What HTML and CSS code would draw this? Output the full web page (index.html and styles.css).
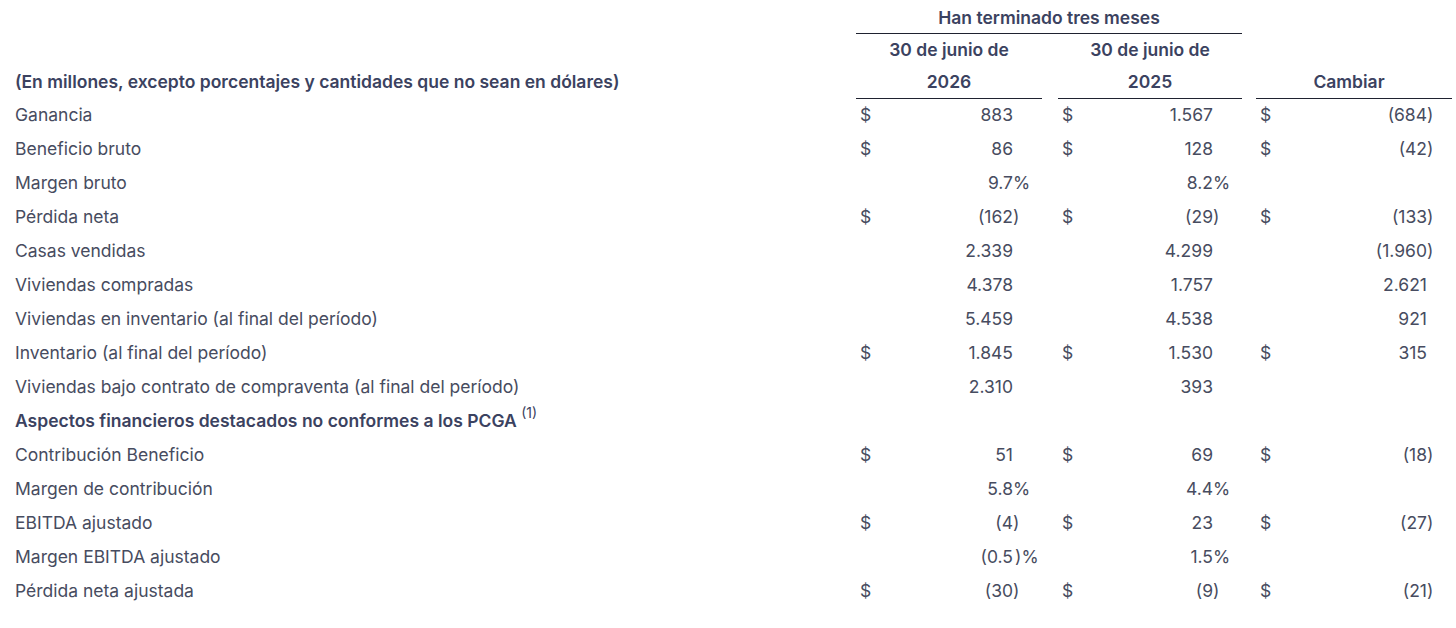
FILE: index.html
```html
<!DOCTYPE html>
<html lang="es">
<head>
<meta charset="utf-8">
<title>Resultados</title>
<link rel="stylesheet" href="styles.css">
</head>
<body>
<div class="fin">
  <div class="row head1">
    <div class="lab"></div>
    <div class="span12 hcell toprule">Han terminado tres meses</div>
  </div>
  <div class="row head2">
    <div class="lab hlab">(En millones, excepto porcentajes y cantidades que no sean en dólares)</div>
    <div class="g1 hcell rule">30 de junio de<br>2026</div>
    <div class="gap1"></div>
    <div class="g2 hcell rule">30 de junio de<br>2025</div>
    <div class="gap2"></div>
    <div class="g3 hcell rule cambiar"><span>Cambiar</span></div>
  </div>

  <div class="row"><div class="lab">Ganancia</div><div class="d">$</div><div class="n">883</div><div class="s"></div><div></div><div class="d">$</div><div class="n">1.567</div><div class="s"></div><div></div><div class="d">$</div><div class="n">(684</div><div class="s">)</div></div>
  <div class="row"><div class="lab">Beneficio bruto</div><div class="d">$</div><div class="n">86</div><div class="s"></div><div></div><div class="d">$</div><div class="n">128</div><div class="s"></div><div></div><div class="d">$</div><div class="n">(42</div><div class="s">)</div></div>
  <div class="row"><div class="lab">Margen bruto</div><div class="d"></div><div class="n">9.7</div><div class="s">%</div><div></div><div class="d"></div><div class="n">8.2</div><div class="s">%</div><div></div><div class="d"></div><div class="n"></div><div class="s"></div></div>
  <div class="row"><div class="lab">Pérdida neta</div><div class="d">$</div><div class="n">(162</div><div class="s">)</div><div></div><div class="d">$</div><div class="n">(29</div><div class="s">)</div><div></div><div class="d">$</div><div class="n">(133</div><div class="s">)</div></div>
  <div class="row"><div class="lab">Casas vendidas</div><div class="d"></div><div class="n">2.339</div><div class="s"></div><div></div><div class="d"></div><div class="n">4.299</div><div class="s"></div><div></div><div class="d"></div><div class="n">(1.960</div><div class="s">)</div></div>
  <div class="row"><div class="lab">Viviendas compradas</div><div class="d"></div><div class="n">4.378</div><div class="s"></div><div></div><div class="d"></div><div class="n">1.757</div><div class="s"></div><div></div><div class="d"></div><div class="n">2.621</div><div class="s"></div></div>
  <div class="row"><div class="lab">Viviendas en inventario (al final del período)</div><div class="d"></div><div class="n">5.459</div><div class="s"></div><div></div><div class="d"></div><div class="n">4.538</div><div class="s"></div><div></div><div class="d"></div><div class="n">921</div><div class="s"></div></div>
  <div class="row"><div class="lab">Inventario (al final del período)</div><div class="d">$</div><div class="n">1.845</div><div class="s"></div><div></div><div class="d">$</div><div class="n">1.530</div><div class="s"></div><div></div><div class="d">$</div><div class="n">315</div><div class="s"></div></div>
  <div class="row"><div class="lab">Viviendas bajo contrato de compraventa (al final del período)</div><div class="d"></div><div class="n">2.310</div><div class="s"></div><div></div><div class="d"></div><div class="n">393</div><div class="s"></div><div></div><div class="d"></div><div class="n"></div><div class="s"></div></div>
  <div class="row"><div class="lab sect">Aspectos financieros destacados no conformes a los PCGA <sup class="fn">(1)</sup></div></div>
  <div class="row"><div class="lab">Contribución Beneficio</div><div class="d">$</div><div class="n">51</div><div class="s"></div><div></div><div class="d">$</div><div class="n">69</div><div class="s"></div><div></div><div class="d">$</div><div class="n">(18</div><div class="s">)</div></div>
  <div class="row"><div class="lab">Margen de contribución</div><div class="d"></div><div class="n">5.8</div><div class="s">%</div><div></div><div class="d"></div><div class="n">4.4</div><div class="s">%</div><div></div><div class="d"></div><div class="n"></div><div class="s"></div></div>
  <div class="row"><div class="lab">EBITDA ajustado</div><div class="d">$</div><div class="n">(4</div><div class="s">)</div><div></div><div class="d">$</div><div class="n">23</div><div class="s"></div><div></div><div class="d">$</div><div class="n">(27</div><div class="s">)</div></div>
  <div class="row"><div class="lab">Margen EBITDA ajustado</div><div class="d"></div><div class="n">(0.5</div><div class="s sp">)%</div><div></div><div class="d"></div><div class="n">1.5</div><div class="s">%</div><div></div><div class="d"></div><div class="n"></div><div class="s"></div></div>
  <div class="row"><div class="lab">Pérdida neta ajustada</div><div class="d">$</div><div class="n">(30</div><div class="s">)</div><div></div><div class="d">$</div><div class="n">(9</div><div class="s">)</div><div></div><div class="d">$</div><div class="n">(21</div><div class="s">)</div></div>
</div>
</body>
</html>
```

FILE: styles.css
```css
html, body {
  margin: 0;
  padding: 0;
  background: #ffffff;
}

body {
  font-family: Inter, "Liberation Sans", sans-serif;
  font-size: 17.5px;
  color: #474c60;
}

.fin {
  padding-left: 15px;
  width: 1437px;
}

.row {
  display: grid;
  grid-template-columns: 841px 28px 129px 29px 16px 28px 127px 29px 14px 28px 143px 25px;
  height: 34px;
  align-items: center;
  line-height: 34px;
  white-space: nowrap;
}

.lab {
  grid-column: 1;
}

.d {
  padding-left: 4px;
}

.n {
  text-align: right;
}

.s {
  text-align: left;
}

.s.sp {
  padding-left: 2px;
}

.sect {
  font-weight: 600;
  color: #3b4260;
}

.fn {
  font-weight: 400;
  font-size: 14px;
  line-height: 0;
  vertical-align: 9px;
  color: #3b4260;
}

.hcell {
  font-weight: 600;
  color: #3b4260;
  text-align: center;
}

.span12 {
  grid-column: 2 / 9;
  height: 34px;
  box-sizing: border-box;
  line-height: 35px;
}

.toprule {
  border-bottom: 1px solid #1f2230;
}

.head2 {
  height: 64px;
  align-items: stretch;
  line-height: 32px;
}

.hlab {
  font-weight: 600;
  color: #3b4260;
  align-self: end;
  padding-bottom: 1px;
}

.g1 {
  grid-column: 2 / 5;
}

.g2 {
  grid-column: 6 / 9;
}

.g3 {
  grid-column: 10 / 13;
}

.rule {
  border-bottom: 1px solid #1f2230;
  box-sizing: border-box;
}

.cambiar {
  display: flex;
  align-items: flex-end;
  justify-content: center;
  padding-right: 10px;
}
```
